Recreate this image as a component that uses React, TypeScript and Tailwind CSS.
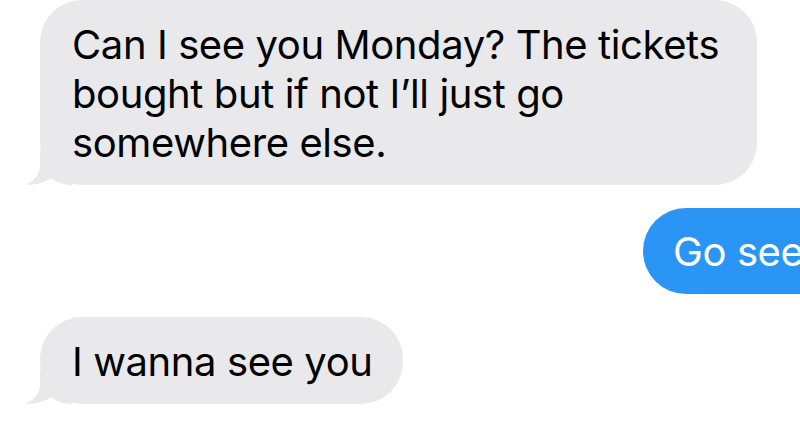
import React from 'react';

// --- iOS style message tail ---
const Tail: React.FC = () => (
    <svg
        className="absolute left-[-14px] bottom-0"
        width="46"
        height="34"
        viewBox="0 0 46 34"
        fill="#e9e9eb"
    >
        <path d="M14 0 L14 14 C14 24 8 30 0 33.5 C9 34.5 19 31.5 25 27 C30 31 37 34 46 34 L46 0 Z" />
    </svg>
);

type BubbleProps = {
    children: React.ReactNode;
    className?: string;
};

const Incoming: React.FC<BubbleProps> = ({ children, className = '' }) => (
    <div className={`relative ml-[40px] bg-[#e9e9eb] rounded-[42px] pl-[32px] pr-[30px] pt-[20px] pb-[18px] text-black ${className}`}>
        {children}
        <Tail />
    </div>
);

export default function App() {
    return (
        <div
            className="w-[800px] h-[430px] overflow-hidden bg-white flex flex-col gap-[23px] text-[40px] leading-[49px] tracking-[-0.4px]"
            style={{ fontFamily: 'Inter, "Liberation Sans", sans-serif' }}
        >
            <Incoming className="w-[717px]">
                Can I see you Monday? The tickets bought but if not I’ll just go somewhere else.
            </Incoming>

            <div className="ml-[643px] w-[260px] shrink-0 bg-[#2a95f5] rounded-[43px] pl-[30px] pt-[19px] pb-[18px] text-white whitespace-nowrap">
                Go see
            </div>

            <Incoming className="self-start !pr-[30px]">I wanna see you</Incoming>
        </div>
    );
}
